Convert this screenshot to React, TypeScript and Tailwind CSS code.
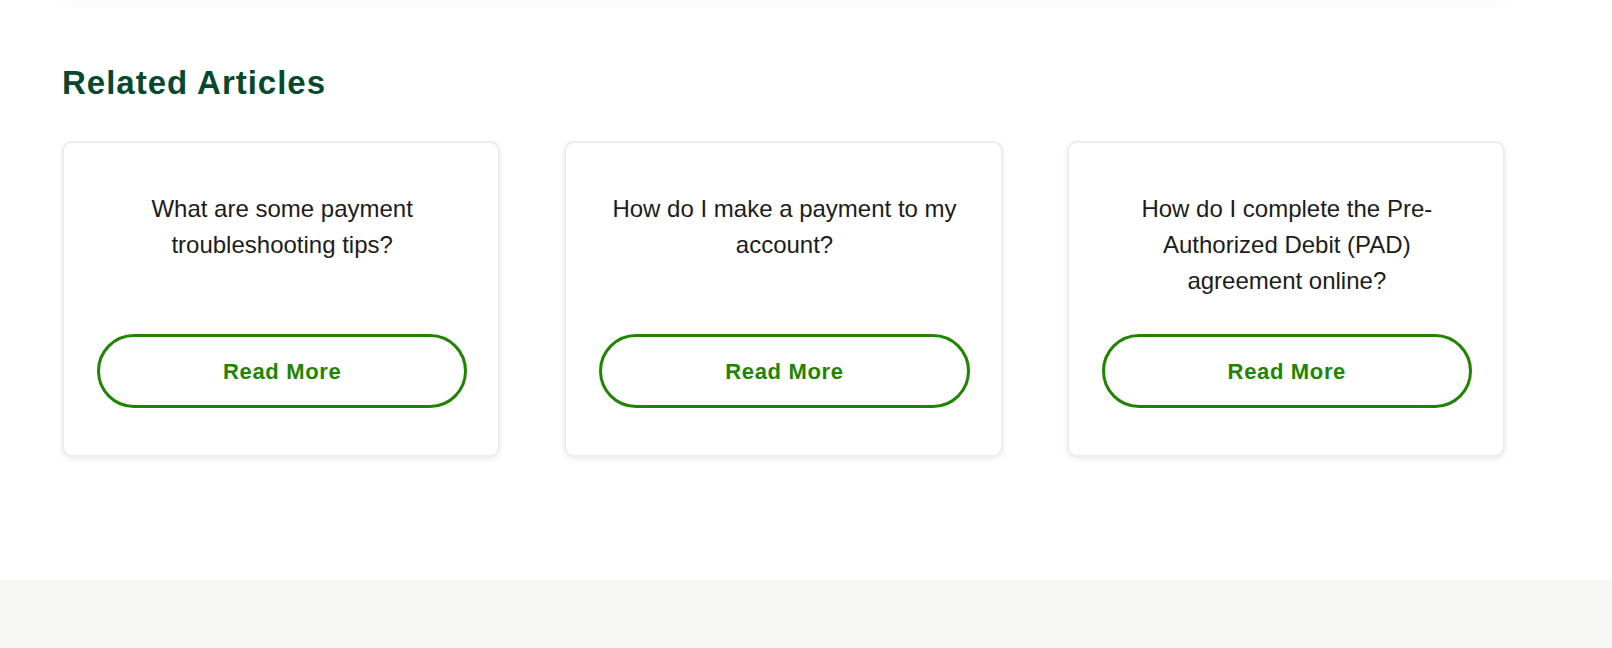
import React from "react";

const articles = [
  "What are some payment troubleshooting tips?",
  "How do I make a payment to my account?",
  "How do I complete the Pre-Authorized Debit (PAD) agreement online?",
];

const ArticleCard = ({ title }: { title: string }) => {
  return (
    <div className="flex flex-col flex-1 bg-white border-2 border-[#ededed] rounded-[10px] shadow-[0_2px_6px_rgba(0,0,0,0.08)] pl-[33px] pr-[31px] pt-[48px] pb-[47px]">
      <p className="mx-auto max-w-[352px] mb-[35px] text-center text-[24px] leading-[36px] text-[#1c1c1c]">
        {title}
      </p>
      <button className="mt-auto h-[74px] w-full rounded-full border-[3px] border-[#1f8400] bg-white flex items-center justify-center text-[22px] font-bold tracking-[0.03em] text-[#1f8400]">
        Read More
      </button>
    </div>
  );
};

const App = () => {
  return (
    <div className="w-full bg-white font-['Liberation_Sans',Arial,sans-serif]">
      <div className="ml-[62px] w-[1443px]">
        <div className="h-px -mt-px rounded-b-[8px] shadow-[0_2px_8px_rgba(0,0,0,0.16)]"></div>
        <h2 className="pt-[63px] text-[33px] leading-[40px] font-bold tracking-[0.03em] text-[#07482f]">
          Related Articles
        </h2>
        <div className="mt-[38px] grid grid-cols-3 gap-[64px] pb-[123px]">
          {articles.map((a) => (
            <ArticleCard key={a} title={a} />
          ))}
        </div>
      </div>
      <div className="w-full h-[100px] bg-[#f6f7f2]"></div>
    </div>
  );
};

export default App;
